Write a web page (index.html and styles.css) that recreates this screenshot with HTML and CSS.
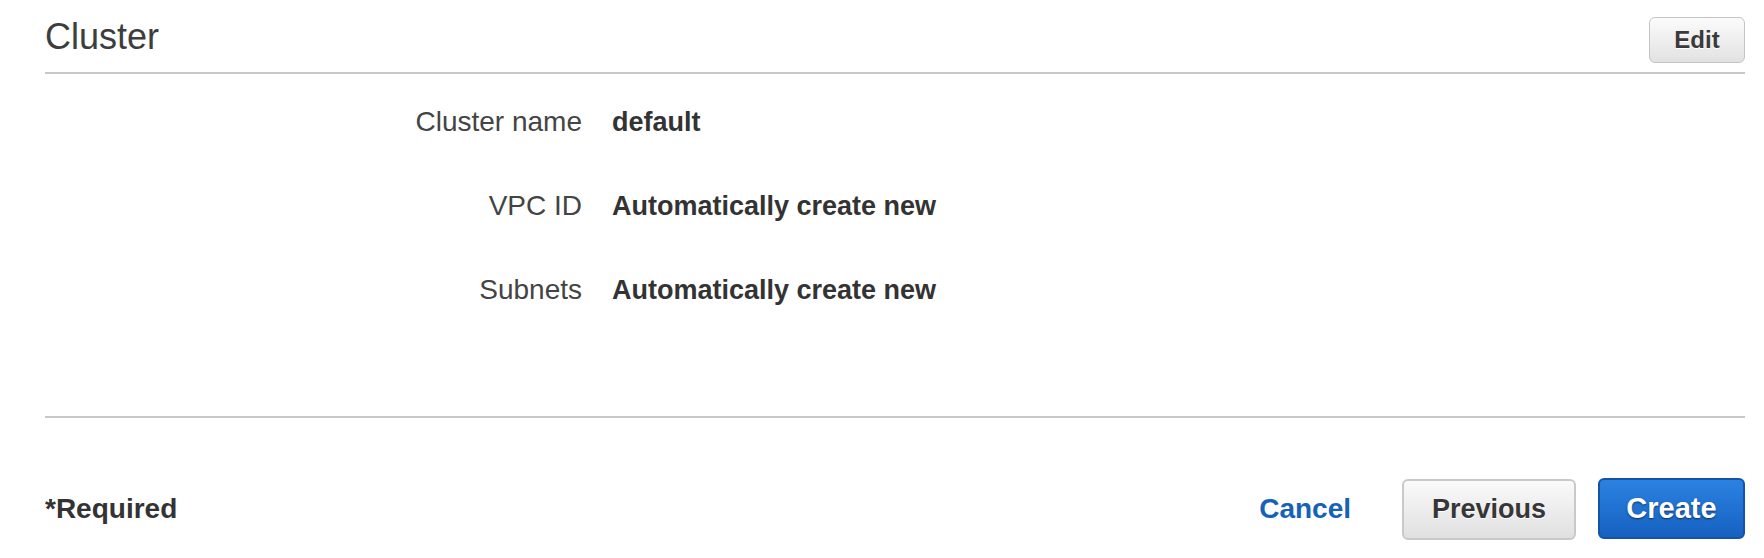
FILE: index.html
```html
<!DOCTYPE html>
<html>
<head>
<meta charset="utf-8">
<link rel="stylesheet" href="styles.css">
</head>
<body>
<div class="page">
  <div class="header">
    <h2 class="title">Cluster</h2>
    <button class="btn btn-edit">Edit</button>
  </div>
  <div class="details">
    <div class="label">Cluster name</div>
    <div class="value">default</div>
    <div class="label">VPC ID</div>
    <div class="value">Automatically create new</div>
    <div class="label">Subnets</div>
    <div class="value">Automatically create new</div>
  </div>
  <div class="footer">
    <div class="required">*Required</div>
    <div class="actions">
      <a class="cancel">Cancel</a>
      <button class="btn btn-prev">Previous</button>
      <button class="btn btn-create">Create</button>
    </div>
  </div>
</div>
</body>
</html>
```
FILE: styles.css
```css
html, body {
  margin: 0;
  padding: 0;
  background: #ffffff;
}
body {
  font-family: "Liberation Sans", Arial, Helvetica, sans-serif;
  color: #444444;
}
.page {
  padding: 0 19px 0 45px;
}
.header {
  display: flex;
  justify-content: space-between;
  align-items: flex-start;
  padding: 17px 0 9px 0;
  border-bottom: 2px solid #c8c8c8;
}
.title {
  margin: 2px 0 0 0;
  font-size: 36px;
  line-height: 36px;
  font-weight: normal;
  color: #3d3d3d;
}
.btn {
  font-family: "Liberation Sans", Arial, Helvetica, sans-serif;
  font-weight: bold;
  border-radius: 6px;
  cursor: pointer;
  box-sizing: border-box;
}
.btn-edit {
  height: 46px;
  width: 96px;
  padding: 0;
  font-size: 24px;
  color: #3a3a3a;
  border: 1px solid #c4c4c4;
  background: linear-gradient(#fbfbfb, #e2e2e2);
  text-shadow: 0 1px 0 #ffffff;
}
.details {
  display: grid;
  grid-template-columns: 537px 1fr;
  column-gap: 30px;
  row-gap: 48px;
  padding: 30px 0 108px 0;
  border-bottom: 2px solid #c8c8c8;
  font-size: 27px;
  line-height: 36px;
}
.label {
  text-align: right;
  font-size: 28px;
  color: #444444;
}
.value {
  font-weight: bold;
  color: #333333;
}
.footer {
  display: flex;
  justify-content: space-between;
  align-items: baseline;
  padding: 60px 0 0 0;
}
.required {
  font-size: 28px;
  font-weight: bold;
  color: #333333;
}
.actions {
  display: flex;
  align-items: baseline;
}
.cancel {
  font-size: 28px;
  font-weight: bold;
  color: #1563b8;
  margin-right: 51px;
  cursor: pointer;
}
.btn-prev {
  height: 61px;
  width: 174px;
  padding: 0;
  font-size: 27px;
  color: #363636;
  border: 2px solid #c9c9c9;
  background: linear-gradient(#fafafa, #e0e0e0);
  text-shadow: 0 1px 0 #ffffff;
  margin-right: 22px;
}
.btn-create {
  height: 61px;
  width: 147px;
  padding: 0;
  font-size: 29px;
  color: #ffffff;
  border: 2px solid #1553a8;
  background: linear-gradient(#2b82e2, #1561c0);
  text-shadow: 0 1px 2px rgba(0, 0, 0, 0.55);
}
```
